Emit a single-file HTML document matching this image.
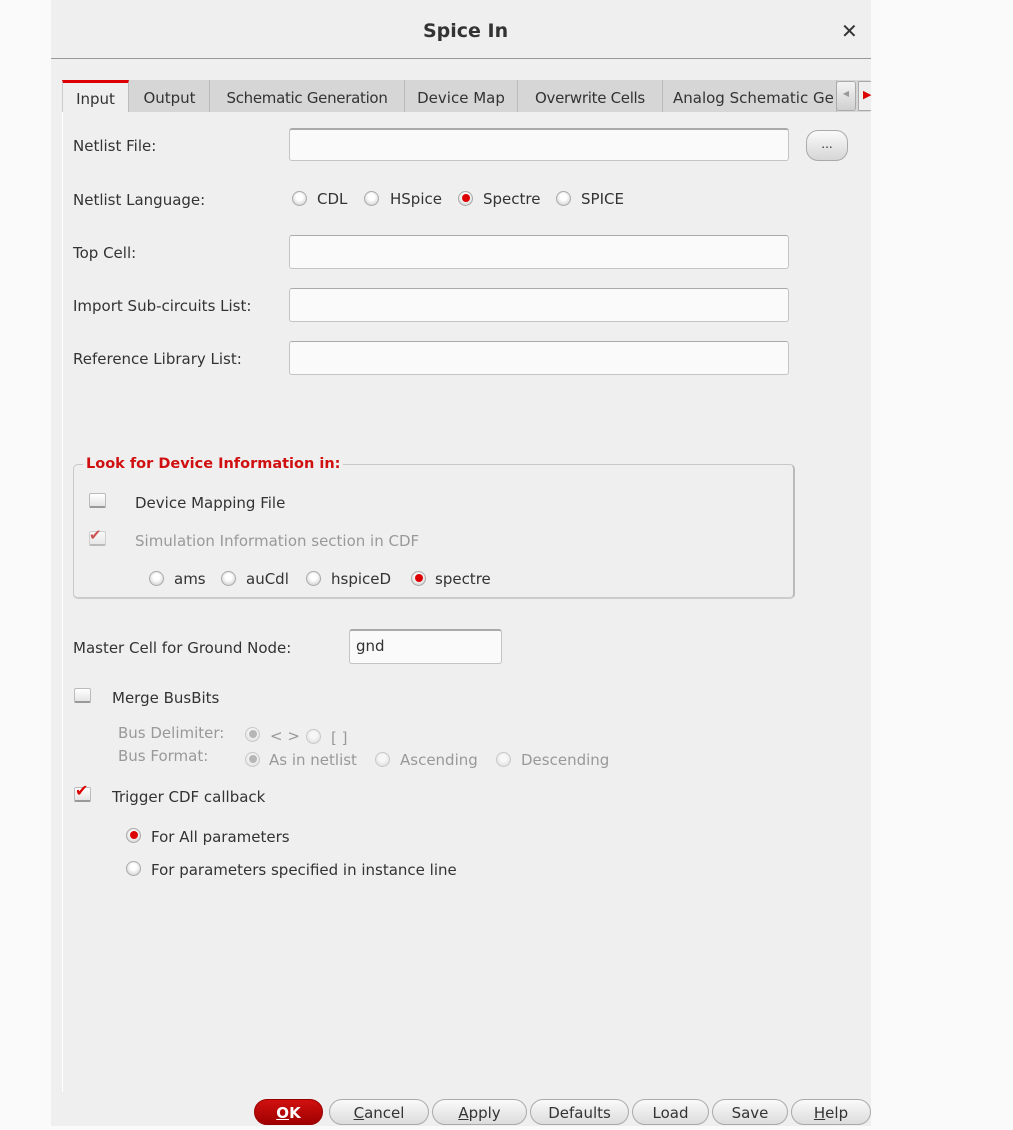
<!DOCTYPE html>
<html><head><meta charset="utf-8"><style>
*{margin:0;padding:0;box-sizing:border-box}
body{width:1013px;height:1130px;background:#fafafa;position:relative;overflow:hidden;font-family:"DejaVu Sans","Liberation Sans",sans-serif;font-size:15px;color:#333}
.a{position:absolute;white-space:nowrap}
#dlg{position:absolute;left:51px;top:0;width:820px;height:1126px;background:#efefef}
.inp{position:absolute;background:#fafafa;border:1px solid #c4c4c4;border-top:2px solid #aaa;border-radius:3px}
.tab{position:absolute;top:80px;height:32px;background:#d6d6d6;border-right:1px solid #bbb;color:#333;font-size:15px;text-align:center;line-height:36px}
.rb{position:absolute;width:15px;height:15px;border-radius:50%;background:radial-gradient(circle at 50% 40%,#fff 30%,#ddd 70%,#bbb);border:1px solid #aaa}
.rb.on::after{content:"";position:absolute;left:3px;top:2px;width:8px;height:8px;border-radius:50%;background:#d00}
.rb.dis{opacity:.55}
.rb.dis.on::after{background:#888}
.cb{position:absolute;width:17px;height:15px;border:1px solid #bbb;border-bottom:2px solid #999;border-radius:2px;background:linear-gradient(#fff,#e5e5e5)}
.btn{position:absolute;top:1099px;height:26px;border:1px solid #aaa;border-radius:13px;background:linear-gradient(#fafafa,#dcdcdc);text-align:center;line-height:26px;font-size:15px;color:#333}
.g{color:#999}
</style></head><body>
<div id="dlg"></div>
<div class="a" style="left:51px;top:58px;width:820px;height:1px;background:#999"></div>
<div class="a" style="left:423px;top:20px;font-size:19px;font-weight:bold;color:#333">Spice In</div>
<div class="a" style="left:841px;top:19px;font-size:20px;font-weight:bold;color:#333">✕</div>
<div class="a" style="left:62px;top:112px;width:1px;height:980px;background:#fff"></div>
<div class="a" style="left:62px;top:80px;width:808px;height:32px;background:#d6d6d6"></div>
<div class="tab" style="left:62px;width:67px;background:#efefef;border-top:3px solid #d00;line-height:32px;border-left:1px solid #ccc">Input</div>
<div class="tab" style="left:130px;width:80px">Output</div>
<div class="tab" style="left:210px;width:195px;letter-spacing:-0.3px">Schematic Generation</div>
<div class="tab" style="left:405px;width:113px">Device Map</div>
<div class="tab" style="left:518px;width:145px;letter-spacing:-0.3px">Overwrite Cells</div>
<div class="tab" style="left:663px;width:174px;text-align:left;padding-left:10px;overflow:hidden">Analog Schematic Ge</div>
<div class="a" style="left:836px;top:81px;width:20px;height:30px;background:linear-gradient(#f4f4f4,#d0d0d0);border:1px solid #aaa;border-radius:3px;font-size:8px;color:#999;text-align:center;line-height:24px">◀</div>
<div class="a" style="left:858px;top:81px;width:13px;height:30px;background:#eee;border:1px solid #aaa;border-right:none;color:#d00;font-size:11px;line-height:26px;padding-left:4px">▶</div>

<div class="a" style="left:73px;top:137px">Netlist File:</div>
<div class="inp" style="left:289px;top:128px;width:500px;height:33px"></div>
<div class="a" style="left:806px;top:130px;width:42px;height:31px;border:1px solid #aaa;border-radius:12px;background:linear-gradient(#fafafa,#d6d6d6);text-align:center;line-height:26px;font-size:12px">...</div>

<div class="a" style="left:73px;top:191px">Netlist Language:</div>
<div class="rb" style="left:292px;top:191px"></div><div class="a" style="left:317px;top:190px">CDL</div>
<div class="rb" style="left:364px;top:191px"></div><div class="a" style="left:390px;top:190px">HSpice</div>
<div class="rb on" style="left:458px;top:191px"></div><div class="a" style="left:483px;top:190px">Spectre</div>
<div class="rb" style="left:556px;top:191px"></div><div class="a" style="left:581px;top:190px">SPICE</div>

<div class="a" style="left:73px;top:244px">Top Cell:</div>
<div class="inp" style="left:289px;top:235px;width:500px;height:34px;border-top-width:1px"></div>
<div class="a" style="left:73px;top:297px">Import Sub-circuits List:</div>
<div class="inp" style="left:289px;top:288px;width:500px;height:34px;border-top-width:1px"></div>
<div class="a" style="left:73px;top:350px">Reference Library List:</div>
<div class="inp" style="left:289px;top:341px;width:500px;height:34px;border-top-width:1px"></div>

<div class="a" style="left:73px;top:464px;width:722px;height:135px;border:1px solid #c8c8c8;border-right:2px solid #bbb;border-bottom:2px solid #ccc;border-radius:5px"></div>
<div class="a" style="left:83px;top:456px;background:#efefef;padding:0 3px;color:#d01010;font-weight:bold;font-size:14.5px">Look for Device Information in:</div>
<div class="cb" style="left:89px;top:493px"></div><div class="a" style="left:135px;top:494px">Device Mapping File</div>
<div class="cb" style="left:89px;top:531px;opacity:.6"></div><div class="a" style="left:89px;top:526px;color:#c55;font-size:15px">✔</div>
<div class="a g" style="left:135px;top:532px">Simulation Information section in CDF</div>
<div class="rb" style="left:149px;top:571px"></div><div class="a" style="left:174px;top:570px">ams</div>
<div class="rb" style="left:221px;top:571px"></div><div class="a" style="left:246px;top:570px">auCdl</div>
<div class="rb" style="left:306px;top:571px"></div><div class="a" style="left:331px;top:570px">hspiceD</div>
<div class="rb on" style="left:411px;top:571px"></div><div class="a" style="left:435px;top:570px">spectre</div>

<div class="a" style="left:73px;top:639px">Master Cell for Ground Node:</div>
<div class="inp" style="left:349px;top:629px;width:153px;height:35px"></div>
<div class="a" style="left:356px;top:637px">gnd</div>

<div class="cb" style="left:74px;top:688px"></div><div class="a" style="left:112px;top:689px">Merge BusBits</div>
<div class="a g" style="left:118px;top:724px">Bus Delimiter:</div>
<div class="a g" style="left:118px;top:747px">Bus Format:</div>
<div class="rb dis on" style="left:245px;top:727px"></div><div class="a g" style="left:270px;top:727px">&lt; &gt;</div>
<div class="rb dis" style="left:306px;top:729px"></div><div class="a g" style="left:331px;top:729px">[ ]</div>
<div class="rb dis on" style="left:245px;top:752px"></div><div class="a g" style="left:269px;top:751px">As in netlist</div>
<div class="rb dis" style="left:375px;top:752px"></div><div class="a g" style="left:400px;top:751px">Ascending</div>
<div class="rb dis" style="left:496px;top:752px"></div><div class="a g" style="left:521px;top:751px">Descending</div>

<div class="cb" style="left:74px;top:787px"></div><div class="a" style="left:75px;top:781px;color:#d00;font-size:16px">✔</div>
<div class="a" style="left:112px;top:788px">Trigger CDF callback</div>
<div class="rb on" style="left:126px;top:828px"></div><div class="a" style="left:151px;top:828px">For All parameters</div>
<div class="rb" style="left:126px;top:861px"></div><div class="a" style="left:151px;top:861px">For parameters specified in instance line</div>

<div class="btn" style="left:254px;width:69px;background:linear-gradient(#d01010,#a00000);border-color:#900;color:#fff;font-weight:bold"><u>O</u>K</div>
<div class="btn" style="left:329px;width:100px"><u>C</u>ancel</div>
<div class="btn" style="left:432px;width:95px"><u>A</u>pply</div>
<div class="btn" style="left:530px;width:99px">Defaults</div>
<div class="btn" style="left:632px;width:77px">Load</div>
<div class="btn" style="left:712px;width:76px">Save</div>
<div class="btn" style="left:791px;width:80px"><u>H</u>elp</div>
</body></html>
